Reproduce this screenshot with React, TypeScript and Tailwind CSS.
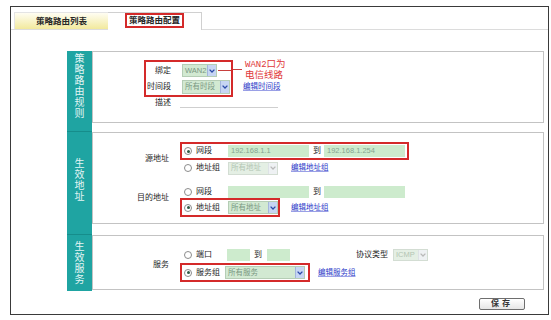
import React from "react";

// shared bits for the tiny form controls
function Radio({ checked }: { checked?: boolean }) {
  return (
    <span className="flex h-[8px] w-[8px] shrink-0 items-center justify-center rounded-full border border-[#8c8c8c] bg-white">
      {checked && <span className="h-[3px] w-[3px] rounded-full bg-[#2d5a44]" />}
    </span>
  );
}

function Chevron({ color }: { color: string }) {
  return (
    <svg width="6" height="4" viewBox="0 0 6 4">
      <polyline points="0.6,0.6 3,3 5.4,0.6" fill="none" stroke={color} strokeWidth="1.3" />
    </svg>
  );
}

function Select({
  className,
  value,
  disabled,
}: {
  className: string;
  value: string;
  disabled?: boolean;
}) {
  return (
    <div
      className={`flex shrink-0 items-stretch border ${
        disabled ? "border-[#d3ddd3] bg-[#e4efe4]" : "border-[#b5cdb5] bg-[#d2e9d2]"
      } ${className}`}
    >
      <span
        className={`flex flex-1 items-center overflow-hidden whitespace-nowrap pl-[2px] text-[7.5px] ${
          disabled ? "text-[#b3c5b3]" : "text-[#7a9882]"
        }`}
      >
        {value}
      </span>
      <span
        className={`flex w-[9px] items-center justify-center border-l ${
          disabled ? "border-[#dde2e6] bg-[#eef1f3]" : "border-[#a3b5dc] bg-[#c6d5f3]"
        }`}
      >
        <Chevron color={disabled ? "#b9b9b9" : "#2b4aa8"} />
      </span>
    </div>
  );
}

function Input({ className, value }: { className: string; value?: string }) {
  return (
    <div
      className={`h-[12px] shrink-0 bg-[#cdebcd] pl-[3px] text-[7.5px] leading-[12px] text-[#86a592] ${className}`}
    >
      {value}
    </div>
  );
}

function Link({ children, className }: { children: React.ReactNode; className?: string }) {
  return (
    <span className={`whitespace-nowrap text-[7.5px] text-[#2a38c8] underline decoration-[#9aa0e6] ${className ?? ""}`}>
      {children}
    </span>
  );
}

function Teal({ chars, pad, border }: { chars: string; pad: string; border?: boolean }) {
  return (
    <div
      className={`flex w-[25px] shrink-0 flex-col items-center bg-[#1fa4a2] text-[10px] leading-[11px] text-[#e4f5f4] ${pad} ${
        border ? "border-t border-[#168d8b]" : ""
      }`}
    >
      {chars.split("").map((c) => (
        <div key={c}>{c}</div>
      ))}
    </div>
  );
}

export default function App() {
  return (
    <div className="h-[320px] w-[551px] bg-white pl-[10px] pt-[6px] font-['Liberation_Sans','Noto_Sans_CJK_SC',sans-serif] text-[8px] leading-none text-[#262626]">
      <div className="flex h-[309px] w-[539px] flex-col border border-[#3a3a3a]">
        {/* tabs */}
        <div className="mt-[5px] flex h-[18px] border-b border-[#dcdcdc] pl-[3px]">
          <div className="flex h-[17px] w-[94px] items-center justify-center border-l border-t border-[#e4e4e4] bg-linear-to-b from-[#fffdf2] to-[#f2e99c] text-[8.5px] font-bold">
            策略路由列表
          </div>
          <div className="relative z-10 flex h-[18px] w-[94px] items-start justify-center border-r border-t border-[#d0d0d0] bg-white">
            <span className="flex h-[15px] items-center border-2 border-[#d42a2a] px-[2px] text-[8.5px] font-bold">
              策略路由配置
            </span>
          </div>
        </div>

        <div className="ml-[56px] mr-[4px] mt-[21px] flex flex-col">
          {/* 策略路由规则 */}
          <div className="flex h-[80px]">
            <Teal chars="策略路由规则" pad="pt-[2px]" />
            <div className="flex-1">
              <div className="h-[72px] border border-[#c3c3c3]">
                <div className="ml-[51px] mt-[8px] flex flex-col">
                  <div className="flex">
                    <div className="flex w-[89px] shrink-0 flex-col gap-[3px] border-2 border-[#d42a2a] pb-[1px] pt-[2px]">
                      <div className="flex h-[13px] items-center">
                        <span className="w-[25px] text-right">绑定</span>
                        <Select className="ml-[11px] h-[13px] w-[35px]" value="WAN2" />
                        <span className="ml-[1px] h-px flex-1 bg-[#c8403e]" />
                      </div>
                      <div className="flex h-[14px] items-center">
                        <span className="w-[25px] whitespace-nowrap text-right">时间段</span>
                        <Select className="ml-[11px] h-[14px] w-[48px]" value="所有时段" />
                      </div>
                    </div>
                    <div className="flex flex-col">
                      <div className="flex h-[18px] items-center">
                        <span className="h-px w-[9px] bg-[#c8403e]" />
                        <div className="ml-[3px] text-[9.5px] leading-[9px] text-[#e0383a]">
                          <span className="font-['Liberation_Mono',monospace] text-[9px]">WAN2</span>口为
                          <br />
                          电信线路
                        </div>
                      </div>
                      <div className="mt-[2px] flex h-[14px] items-center pl-[10px]">
                        <Link>编辑时间段</Link>
                      </div>
                    </div>
                  </div>
                  <div className="flex h-[12px] items-center pl-[2px]">
                    <span className="w-[25px] text-right">描述</span>
                    <span className="ml-[9px] h-[11px] w-[98px] self-start border-b border-[#cfcfcf]" />
                  </div>
                </div>
              </div>
            </div>
          </div>

          {/* 生效地址 */}
          <div className="flex h-[103px]">
            <Teal chars="生效地址" pad="pt-[26px]" border />
            <div className="flex-1 pt-[1px]">
              <div className="flex h-[92px] flex-col border border-[#c3c3c3] pt-[9px]">
                <div className="flex">
                  <span className="w-[76px] self-center text-right">源地址</span>
                  <div className="ml-[11px] flex flex-col items-start">
                    <div className="flex h-[18px] items-center border-2 border-[#d42a2a] px-[2px]">
                      <Radio checked />
                      <span className="ml-[4px] w-[32px]">网段</span>
                      <Input className="w-[81px]" value="192.168.1.1" />
                      <span className="ml-[4px] w-[8px]">到</span>
                      <Input className="ml-[3px] w-[81px]" value="192.168.1.254" />
                    </div>
                    <div className="flex h-[16px] items-center px-[4px]">
                      <Radio />
                      <span className="ml-[4px] w-[32px]">地址组</span>
                      <Select className="h-[13px] w-[50px]" value="所有地址" disabled />
                      <Link className="ml-[13px]">编辑地址组</Link>
                    </div>
                  </div>
                </div>
                <div className="mt-[10px] flex">
                  <span className="mb-[7px] w-[76px] self-center text-right">目的地址</span>
                  <div className="ml-[11px] flex flex-col items-start">
                    <div className="flex h-[12px] items-center px-[4px]">
                      <Radio />
                      <span className="ml-[4px] w-[32px]">网段</span>
                      <Input className="w-[81px]" />
                      <span className="ml-[4px] w-[8px]">到</span>
                      <Input className="ml-[3px] w-[81px]" />
                    </div>
                    <div className="flex items-center">
                      <div className="flex h-[19px] items-center border-2 border-[#d42a2a] pl-[2px]">
                        <Radio checked />
                        <span className="ml-[4px] w-[32px]">地址组</span>
                        <Select className="h-[13px] w-[50px]" value="所有地址" />
                      </div>
                      <Link className="ml-[11px]">编辑地址组</Link>
                    </div>
                  </div>
                </div>
              </div>
            </div>
          </div>

          {/* 生效服务 */}
          <div className="flex h-[57px]">
            <Teal chars="生效服务" pad="pt-[6px]" border />
            <div className="flex-1 pt-[1px]">
              <div className="h-[55px] border border-[#c3c3c3] pt-[11px]">
                <div className="flex">
                  <span className="w-[76px] self-center text-right">服务</span>
                  <div className="ml-[11px] flex flex-col items-start">
                    <div className="flex h-[16px] items-center px-[4px]">
                      <Radio />
                      <span className="ml-[4px] w-[31px]">端口</span>
                      <Input className="w-[23px]" />
                      <span className="ml-[4px] w-[8px]">到</span>
                      <Input className="ml-[5px] w-[23px]" />
                      <span className="ml-[66px] w-[32px] whitespace-nowrap">协议类型</span>
                      <Select className="ml-[5px] h-[12px] w-[35px]" value="ICMP" disabled />
                    </div>
                    <div className="flex items-center">
                      <div className="flex h-[19px] items-center border-2 border-[#d42a2a] pl-[2px] pr-[3px]">
                        <Radio checked />
                        <span className="ml-[4px] w-[29px]">服务组</span>
                        <Select className="h-[13px] w-[80px]" value="所有服务" />
                      </div>
                      <Link className="ml-[8px]">编辑服务组</Link>
                    </div>
                  </div>
                </div>
              </div>
            </div>
          </div>
        </div>

        <div className="mt-[7px] flex justify-end pr-[23px]">
          <button className="flex h-[12px] w-[46px] items-center justify-center rounded-[2px] border border-[#6e6e6e] bg-linear-to-b from-white to-[#e6e6e6] text-[8px] font-bold tracking-[3px] text-[#333]">
            保存
          </button>
        </div>
      </div>
    </div>
  );
}
